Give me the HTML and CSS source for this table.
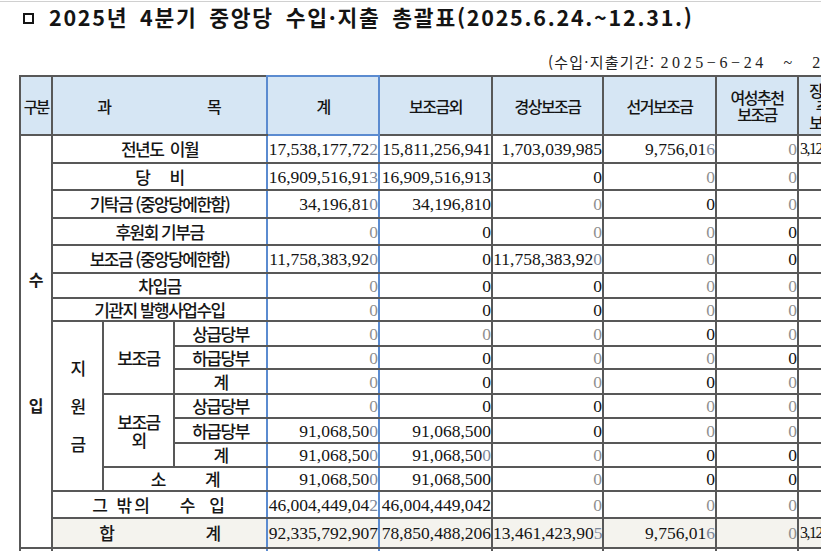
FILE: index.html
```html
<!DOCTYPE html>
<html lang="ko">
<head>
<meta charset="utf-8">
<title>2025년 4분기 중앙당 수입·지출 총괄표</title>
<link rel="stylesheet" href="styles.css">
</head>
<body>
<div class="page">
  <h1 class="title"><span class="box"></span>2025년 4분기 중앙당 수입·지출 총괄표(2025.6.24.~12.31.)</h1>
  <p class="period">(수입·지출기간: <span class="num">2025−6−24 ~ 2025−12−31</span>)</p>
  <table class="summary">
    <colgroup>
      <col class="c-gubun"><col class="c-a"><col class="c-b"><col class="c-c">
      <col class="c-tot"><col class="c-etc"><col class="c-reg"><col class="c-elec"><col class="c-women"><col class="c-dis">
    </colgroup>
    <thead>
      <tr class="r-head">
        <th class="gubun">구분</th>
        <th colspan="3"><div class="spread g95"><span>과</span><span>목</span></div></th>
        <th class="tot">계</th>
        <th>보조금외</th>
        <th>경상보조금</th>
        <th>선거보조금</th>
        <th class="two">여성추천<br>보조금</th>
        <th class="three">장애인<br>추천<br>보조금</th>
      </tr>
    </thead>
    <tbody>
      <tr class="r28">
        <td class="side" rowspan="16"><div class="stack-side"><span>수</span><span>입</span></div></td>
        <td class="lbl" colspan="3">전년도&nbsp;&nbsp;이월</td>
        <td class="n tot">17,538,177,72<span class="f">2</span></td>
        <td class="n">15,811,256,941</td>
        <td class="n">1,703,039,985</td>
        <td class="n">9,756,01<span class="f">6</span></td>
        <td class="n g">0</td>
        <td class="n left squeeze">3,12</td>
      </tr>
      <tr class="r27">
        <td class="lbl" colspan="3"><div class="spread g20"><span>당</span><span>비</span></div></td>
        <td class="n tot">16,909,516,91<span class="f">3</span></td>
        <td class="n">16,909,516,913</td>
        <td class="n">0</td>
        <td class="n g">0</td>
        <td class="n g">0</td>
        <td class="n">0</td>
      </tr>
      <tr class="r28">
        <td class="lbl" colspan="3">기탁금 (중앙당에한함)</td>
        <td class="n tot">34,196,81<span class="f">0</span></td>
        <td class="n">34,196,810</td>
        <td class="n g">0</td>
        <td class="n">0</td>
        <td class="n g">0</td>
        <td class="n">0</td>
      </tr>
      <tr class="r27">
        <td class="lbl" colspan="3">후원회 기부금</td>
        <td class="n tot g">0</td>
        <td class="n">0</td>
        <td class="n g">0</td>
        <td class="n g">0</td>
        <td class="n">0</td>
        <td class="n">0</td>
      </tr>
      <tr class="r28">
        <td class="lbl" colspan="3">보조금 (중앙당에한함)</td>
        <td class="n tot">11,758,383,92<span class="f">0</span></td>
        <td class="n">0</td>
        <td class="n">11,758,383,92<span class="f">0</span></td>
        <td class="n g">0</td>
        <td class="n">0</td>
        <td class="n">0</td>
      </tr>
      <tr class="r25">
        <td class="lbl" colspan="3">차입금</td>
        <td class="n tot g">0</td>
        <td class="n">0</td>
        <td class="n">0</td>
        <td class="n g">0</td>
        <td class="n g">0</td>
        <td class="n">0</td>
      </tr>
      <tr class="r23">
        <td class="lbl" colspan="3">기관지 발행사업수입</td>
        <td class="n tot g">0</td>
        <td class="n">0</td>
        <td class="n">0</td>
        <td class="n g">0</td>
        <td class="n g">0</td>
        <td class="n">0</td>
      </tr>
      <tr class="r25">
        <td class="lbl" rowspan="7"><div class="stack-fund"><span>지</span><span>원</span><span>금</span></div></td>
        <td class="lbl" rowspan="3">보조금</td>
        <td class="lbl">상급당부</td>
        <td class="n tot g">0</td>
        <td class="n g">0</td>
        <td class="n g">0</td>
        <td class="n">0</td>
        <td class="n g">0</td>
        <td class="n">0</td>
      </tr>
      <tr class="r23">
        <td class="lbl">하급당부</td>
        <td class="n tot g">0</td>
        <td class="n">0</td>
        <td class="n g">0</td>
        <td class="n g">0</td>
        <td class="n">0</td>
        <td class="n">0</td>
      </tr>
      <tr class="r25">
        <td class="lbl">계</td>
        <td class="n tot g">0</td>
        <td class="n">0</td>
        <td class="n g">0</td>
        <td class="n">0</td>
        <td class="n g">0</td>
        <td class="n">0</td>
      </tr>
      <tr class="r24">
        <td class="lbl two-line" rowspan="3">보조금<br>외</td>
        <td class="lbl">상급당부</td>
        <td class="n tot g">0</td>
        <td class="n">0</td>
        <td class="n">0</td>
        <td class="n g">0</td>
        <td class="n g">0</td>
        <td class="n">0</td>
      </tr>
      <tr class="r25">
        <td class="lbl">하급당부</td>
        <td class="n tot">91,068,50<span class="f">0</span></td>
        <td class="n">91,068,500</td>
        <td class="n">0</td>
        <td class="n g">0</td>
        <td class="n g">0</td>
        <td class="n">0</td>
      </tr>
      <tr class="r24">
        <td class="lbl">계</td>
        <td class="n tot">91,068,50<span class="f">0</span></td>
        <td class="n">91,068,50<span class="f">0</span></td>
        <td class="n g">0</td>
        <td class="n">0</td>
        <td class="n">0</td>
        <td class="n">0</td>
      </tr>
      <tr class="r24">
        <td class="lbl" colspan="2"><div class="spread g40"><span>소</span><span>계</span></div></td>
        <td class="n tot">91,068,50<span class="f">0</span></td>
        <td class="n">91,068,500</td>
        <td class="n g">0</td>
        <td class="n">0</td>
        <td class="n">0</td>
        <td class="n">0</td>
      </tr>
      <tr class="r27">
        <td class="lbl" colspan="3"><div class="spread g28"><span class="w1">그 밖의</span><span class="w2">수 입</span></div></td>
        <td class="n tot">46,004,449,04<span class="f">2</span></td>
        <td class="n">46,004,449,042</td>
        <td class="n g">0</td>
        <td class="n g">0</td>
        <td class="n g">0</td>
        <td class="n">0</td>
      </tr>
      <tr class="r30 sum-row">
        <td class="lbl" colspan="3"><div class="spread g92"><span>합</span><span>계</span></div></td>
        <td class="n tot">92,335,792,907</td>
        <td class="n">78,850,488,206</td>
        <td class="n">13,461,423,90<span class="f">5</span></td>
        <td class="n">9,756,01<span class="f">6</span></td>
        <td class="n g">0</td>
        <td class="n left squeeze">3,12</td>
      </tr>
      <tr class="r-tail">
        <td></td>
        <td colspan="3"></td>
        <td class="tot"></td>
        <td></td>
        <td></td>
        <td></td>
        <td></td>
        <td></td>
      </tr>
    </tbody>
  </table>
</div>
</body>
</html>
```
FILE: styles.css
```css
html, body {
  margin: 0;
  padding: 0;
  background: #ffffff;
}

.page {
  width: 821px;
  height: 550px;
  margin-top: 1px;
  border-top: 1px solid #d0d0d0;
  overflow: hidden;
  font-family: "Noto Sans CJK KR", "Noto Sans", sans-serif;
  color: #1b1b1b;
}

.title {
  margin: 0;
  height: 30px;
  line-height: 29px;
  padding-left: 23px;
  font-size: 21.5px;
  font-weight: 700;
  letter-spacing: 1.75px;
  word-spacing: 4px;
  white-space: nowrap;
  color: #141414;
}

.title .box {
  display: inline-block;
  width: 7px;
  height: 7px;
  border: 2px solid #151515;
  margin-right: 15px;
  vertical-align: 2px;
}

.period {
  margin: 0 0 3px 0;
  padding: 20px 0 0 548px;
  height: 20px;
  line-height: 20px;
  font-size: 15px;
  font-weight: 400;
  letter-spacing: 1.2px;
  white-space: nowrap;
  color: #222;
}

.period .num {
  font-family: "Liberation Serif", serif;
  font-size: 16px;
  font-weight: 400;
  letter-spacing: 3.6px;
  word-spacing: 9px;
}

.summary {
  margin-left: 19px;
  border-collapse: collapse;
  table-layout: fixed;
  width: 840px;
}

.c-gubun { width: 32px; }
.c-a { width: 51px; }
.c-b { width: 71px; }
.c-c { width: 93px; }
.c-tot { width: 112px; }
.c-etc { width: 113px; }
.c-reg { width: 111px; }
.c-elec { width: 113px; }
.c-women { width: 82px; }
.c-dis { width: 62px; }

.summary th,
.summary td {
  border: 2px solid #585858;
  padding: 0;
  overflow: hidden;
  white-space: nowrap;
  vertical-align: middle;
  line-height: 18px;
}

.summary th {
  background: #d6e6f4;
  font-weight: 500;
  font-size: 16px;
  letter-spacing: -1.5px;
  text-align: center;
  color: #151515;
}

.summary th.gubun {
  letter-spacing: -2px;
  font-size: 15.5px;
}

.summary th.two {
  line-height: 17px;
}

.summary th.three {
  line-height: 16px;
}

.r-head { height: 59px; }
.r23 { height: 23px; }
.r24 { height: 24px; }
.r25 { height: 25px; }
.r27 { height: 27px; }
.r28 { height: 28px; }
.r30 { height: 30px; }
.r-tail { height: 12px; }

.lbl {
  text-align: center;
  font-size: 17px;
  font-weight: 500;
  letter-spacing: -1.5px;
  color: #161616;
}

.two-line {
  line-height: 18px;
}

.spread {
  display: flex;
  justify-content: center;
  align-items: center;
}

.g20 { gap: 20px; }
.g28 { gap: 28px; }
.g40 { gap: 40px; }
.g92 { gap: 92px; }
.g95 { gap: 95px; letter-spacing: 0; }

.w1 { letter-spacing: 2px; }
.w2 { letter-spacing: 2px; word-spacing: 5px; }

.side {
  font-size: 16px;
  font-weight: 700;
  text-align: center;
}

.stack-side {
  display: flex;
  flex-direction: column;
  align-items: center;
  gap: 108px;
  line-height: 18px;
}

.stack-fund {
  display: flex;
  flex-direction: column;
  align-items: center;
  gap: 20px;
  line-height: 18px;
}

.n {
  text-align: right;
  font-family: "Liberation Serif", serif;
  font-size: 17.5px;
  padding-right: 1px;
  color: #141414;
}

.n.left {
  text-align: left;
  padding-left: 1px;
  padding-right: 0;
}

.squeeze {
  letter-spacing: -1.5px;
  font-size: 16px;
}

.g { color: #8f8f8f; }
.f { color: #7c8799; }

.summary .tot {
  border-left-color: #5b8bd0;
  border-right-color: #5b8bd0;
}

.summary th.tot {
  border-color: #5b8bd0;
}

.summary td:has(+ .tot),
.summary th:has(+ .tot) {
  border-right-color: #5b8bd0;
}

.sum-row td {
  background: #f4f3ee;
}
```
